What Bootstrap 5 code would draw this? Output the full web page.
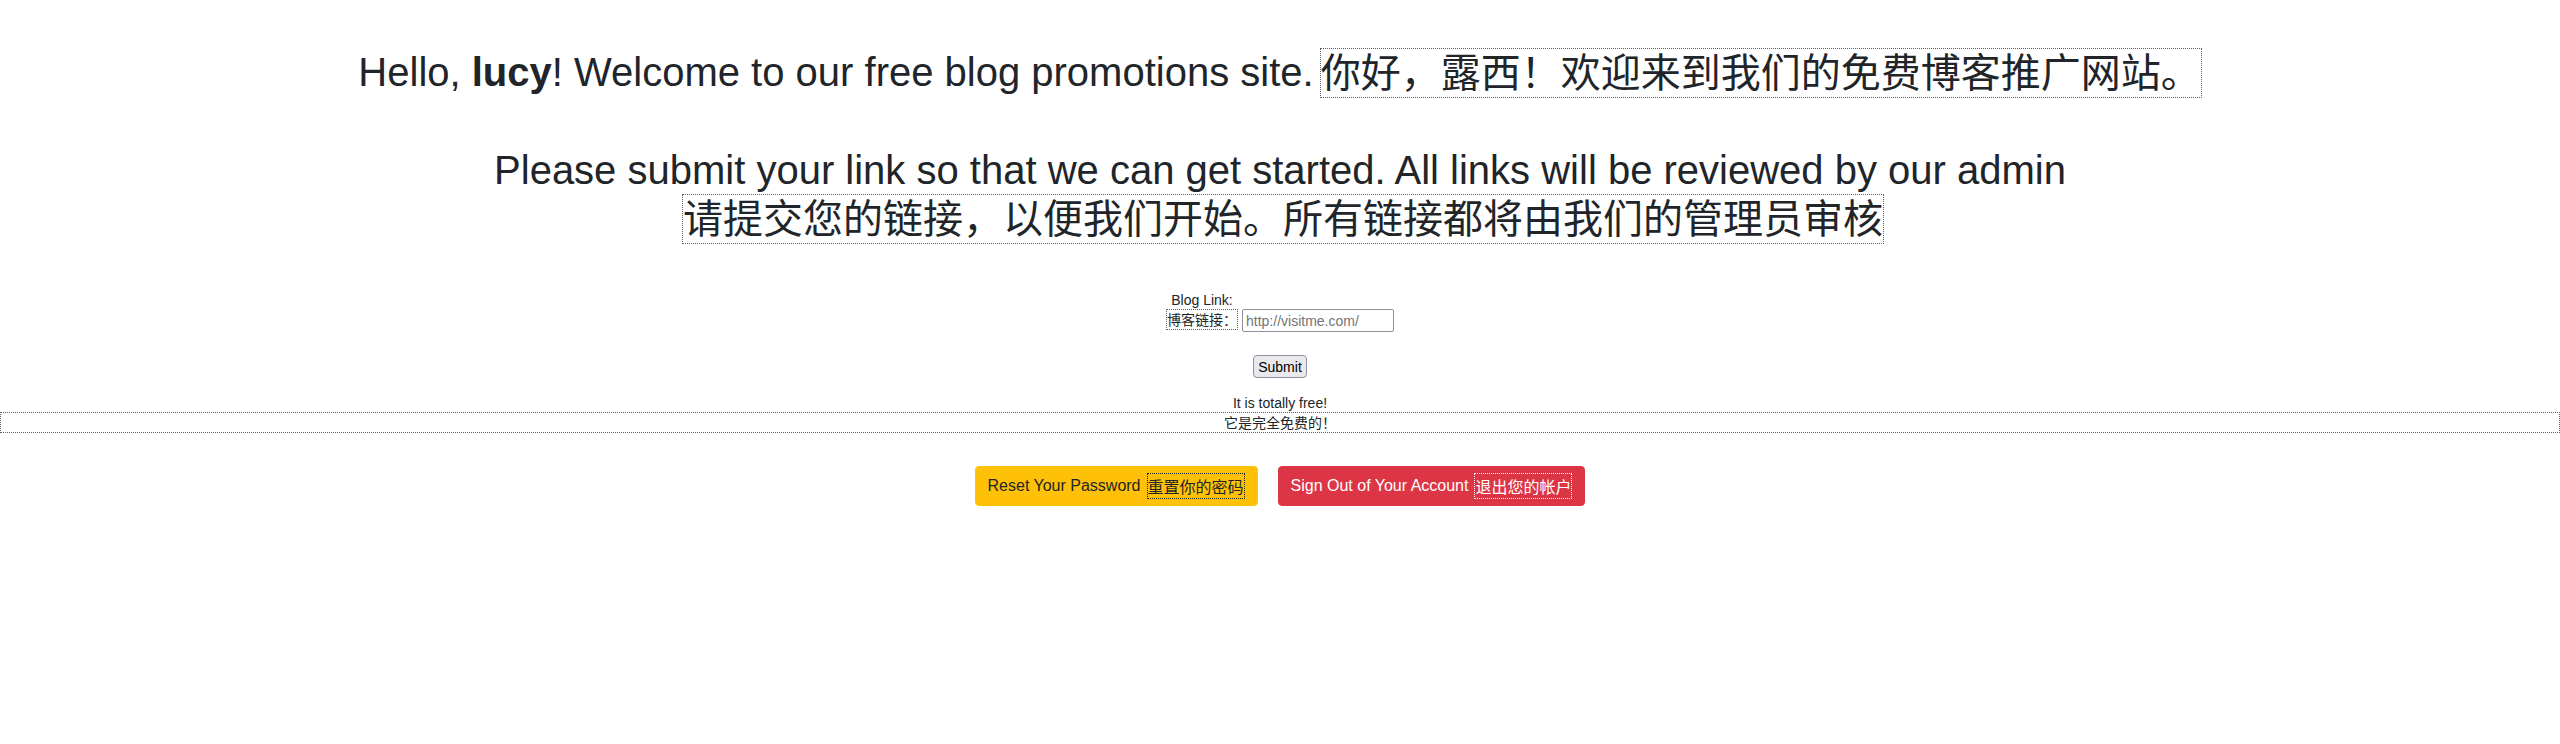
<!DOCTYPE html>
<html lang="en">
<head>
<meta charset="utf-8">
<meta name="viewport" content="width=device-width, initial-scale=1">
<title>Blog promotions</title>
<link href="https://cdn.jsdelivr.net/npm/bootstrap@5.3.0/dist/css/bootstrap.min.css" rel="stylesheet">
<style>
body { font: 14px/18px "Liberation Sans", "Noto Sans CJK SC", sans-serif; color: #212529; }
h1 { font-size: 40px; font-weight: 400; line-height: 48px; }
.zh { border: 1px dotted #5c5f63; font-family: "Noto Sans CJK SC", sans-serif; line-height: 19px; }
h1 .zh { display: inline-block; vertical-align: top; margin-left: 6px; padding-bottom: 6px; line-height: 42px; }
.link-form { margin-top: 47px; }
.link-form label { margin-bottom: 2px; }
.link-form .zh { display: block; }
.link-form input { width: 152px; height: 23px; padding: 1px 3px; border: 1px solid #8f8f9d; border-radius: 2px; }
.link-form input::placeholder { color: #757575; }
.link-form button { height: 23px; margin-top: 23px; padding: 0 4px; border: 1px solid #8f8f9d; border-radius: 4px; background: #e9e9ed; color: #000; }
.free-note { margin: 16px 0 33px; }
.account-links { gap: 20px; }
.account-links .btn { display: flex; align-items: center; gap: 6px; border-radius: 4px; padding: 6px 12px; }
.btn-warning { color: #212529; }
.btn .zh { line-height: 24px; border-color: currentColor; }
</style>
</head>
<body class="text-center pt-5">
<h1 class="mb-5">Hello, <b>lucy</b>! Welcome to our free blog promotions site.<span class="zh" lang="zh">你好，露西！欢迎来到我们的免费博客推广网站。</span></h1>
<h1 class="mb-0">Please submit your link so that we can get started. All links will be reviewed by our admin<br><span class="zh" lang="zh">请提交您的链接，以便我们开始。所有链接都将由我们的管理员审核</span></h1>
<form class="link-form">
<div class="d-flex justify-content-center align-items-end gap-1"><label for="link">Blog Link:<span class="zh" lang="zh">博客链接：</span></label><input id="link" type="text" placeholder="http://visitme.com/"></div>
<button type="submit" class="d-block mx-auto">Submit</button>
</form>
<div class="free-note">It is totally free!<div class="zh" lang="zh">它是完全免费的！</div></div>
<div class="account-links d-flex flex-wrap justify-content-center"><a href="#" class="btn btn-warning">Reset Your Password <span class="zh" lang="zh">重置你的密码</span></a><a href="#" class="btn btn-danger">Sign Out of Your Account <span class="zh" lang="zh">退出您的帐户</span></a></div>
<script src="https://cdn.jsdelivr.net/npm/bootstrap@5.3.0/dist/js/bootstrap.bundle.min.js"></script>
</body>
</html>
